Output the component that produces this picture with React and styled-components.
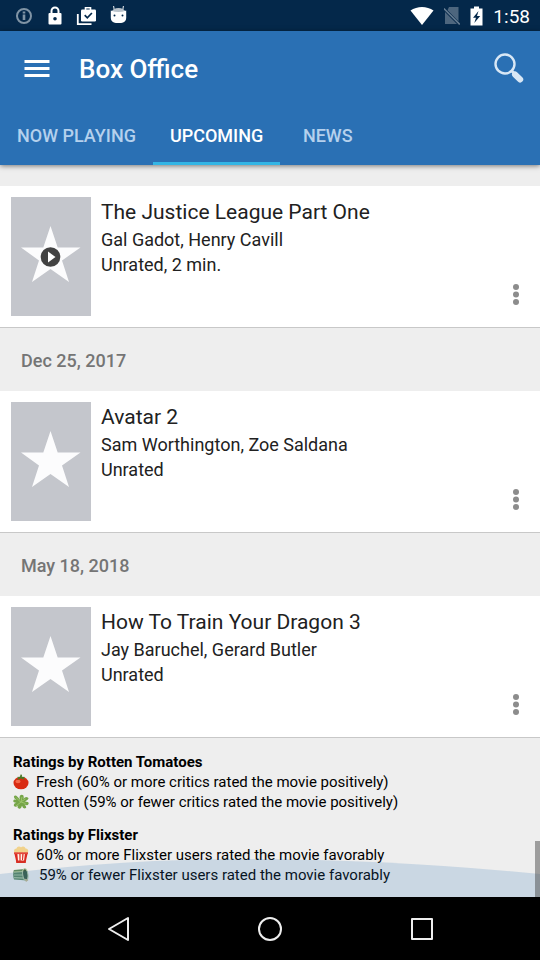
import React, { useState } from "react";
import styled, { createGlobalStyle } from "styled-components";

const GlobalStyle = createGlobalStyle`
  * { box-sizing: border-box; }
  body {
    margin: 0;
    background: #eeeeee;
    color: #212121;
    font-family: Roboto, "Noto Sans", sans-serif;
  }
  h1, h2, h3, p, ul { margin: 0; padding: 0; font-weight: 400; }
  ul { list-style: none; }
  button { border: 0; padding: 0; background: none; font: inherit; color: inherit; cursor: pointer; }
  svg { display: block; flex: none; }
`;

const Screen = styled.div`
  display: flex;
  flex-direction: column;
  min-height: 100vh;
`;

const StatusBar = styled.div`
  display: flex;
  align-items: center;
  justify-content: space-between;
  height: 31px;
  padding: 0 10px;
  background: #04284a;
  color: #ffffff;
`;

const StatusGroup = styled.div`
  display: flex;
  align-items: center;
  gap: ${(p) => p.$gap}px;
`;

const Clock = styled.time`
  font-size: 19px;
  line-height: 31px;
  padding-top: 1px;
`;

const AppBar = styled.header`
  position: relative;
  background: #2a70b4;
  color: #ffffff;
  box-shadow: 0 1px 5px rgba(0, 0, 0, 0.5);
`;

const Toolbar = styled.div`
  display: flex;
  align-items: center;
  height: 75px;
  padding: 0 11px 0 21px;
`;

const IconButton = styled.button`
  display: flex;
  align-items: center;
  justify-content: center;
  width: ${(p) => p.$size}px;
  height: ${(p) => p.$size}px;
`;

const Title = styled.h1`
  flex: 1;
  margin-left: 26px;
  font-size: 26px;
  line-height: 32px;
  font-weight: 500;
`;

const Tabs = styled.div`
  display: flex;
  height: 59px;
`;

const Tab = styled.button`
  min-width: 95px;
  padding: 3px 17px 0;
  border-bottom: 3px solid ${(p) => (p.$active ? "#33b5e5" : "transparent")};
  color: ${(p) => (p.$active ? "#ffffff" : "#b5d1ed")};
  font-size: 18px;
  font-weight: 500;
`;

const MovieList = styled.main`
  padding-top: 21px;
`;

const DateHeading = styled.h2`
  padding: 2px 21px 0;
  font-size: 18px;
  line-height: 61px;
  font-weight: 500;
  color: #757575;
`;

const MovieCard = styled.article`
  display: flex;
  gap: 10px;
  padding: 11px;
  background: #ffffff;
  border-bottom: 1px solid #c8c8c8;
`;

const Poster = styled.div`
  display: flex;
  align-items: center;
  justify-content: center;
  width: 80px;
  height: 119px;
  background: #c4c6cc;
`;

const MovieInfo = styled.div`
  flex: 1;
`;

const MovieTitle = styled.h3`
  font-size: 21px;
  line-height: 30px;
`;

const MovieLine = styled.p`
  font-size: 18px;
  line-height: 25px;
`;

const MoreButton = styled(IconButton)`
  align-self: flex-end;
  width: 26px;
  height: 44px;
`;

const Ratings = styled.footer`
  position: relative;
  display: flex;
  flex-direction: column;
  flex: 1;
  gap: 13px;
  padding: 14px 13px 12px;
  color: #000000;
  font-size: 15px;
  line-height: 20px;
`;

const RatingsTitle = styled.h2`
  font-size: 15px;
  line-height: 20px;
  font-weight: 700;
`;

const RatingRow = styled.li`
  display: flex;
  align-items: center;
  gap: ${(p) => (p.$wide ? 10 : 7)}px;
`;

const Wave = styled.div`
  position: absolute;
  inset: auto 0 0 0;
  height: 38px;
  pointer-events: none;
`;

const ScrollThumb = styled.div`
  position: absolute;
  right: 0;
  bottom: 0;
  width: 5px;
  height: 56px;
  background: rgba(70, 70, 70, 0.48);
`;

const NavBar = styled.nav`
  display: grid;
  grid-template-columns: repeat(3, 152px);
  justify-content: center;
  justify-items: center;
  align-items: center;
  height: 63px;
  background: #000000;
`;

const InfoIcon = () => (
  <svg width="24" height="20" viewBox="0 0 24 20" fill="none" stroke="#8094a5" strokeWidth="2">
    <circle cx="14" cy="10" r="7" />
    <path d="M14 8.500V14M14 5.500V7.500" strokeWidth="2.600" />
  </svg>
);

const LockIcon = () => (
  <svg width="14" height="20" viewBox="0 0 14 20">
    <path d="M3.500 8V5a3.500 3.500 0 0 1 7 0V8" fill="none" stroke="#fff" strokeWidth="2" />
    <path fillRule="evenodd" fill="#fff" d="M1.500 7h11a1 1 0 0 1 1 1v9.500a1 1 0 0 1-1 1h-11a1 1 0 0 1-1-1V8a1 1 0 0 1 1-1zm5.500 4a1.800 1.800 0 1 0 0 3.600 1.800 1.800 0 0 0 0-3.600z" />
  </svg>
);

const WorkDoneIcon = () => (
  <svg width="20" height="20" viewBox="0 0 20 20">
    <path d="M1.800 8v10.200H15.500" fill="none" stroke="#fff" strokeWidth="1.800" />
    <path d="M9.500 4V1.800h5V4" fill="none" stroke="#fff" strokeWidth="1.600" />
    <rect x="5" y="3.500" width="15" height="12" rx="1.200" fill="#fff" />
    <path d="M8.700 9.200l2.600 2.600 4.600-4.800" fill="none" stroke="#04284a" strokeWidth="1.700" />
  </svg>
);

const DroidIcon = () => (
  <svg width="17" height="20" viewBox="0 0 17 20">
    <path d="M4.500 5L3.500 0M12.500 5l1-5" stroke="#cbd3da" strokeWidth="1.200" />
    <path d="M1 6.500Q3 2 8.500 2T16 6.500z" fill="#b9c2ca" />
    <path d="M.8 4.500Q8.500 7.500 16.200 4.500V12a5 5 0 0 1-5 5H5.800a5 5 0 0 1-5-5z" fill="#fff" />
    <circle cx="4.500" cy="9.500" r="1" fill="#04284a" />
    <circle cx="12.500" cy="9.500" r="1" fill="#04284a" />
  </svg>
);

const WifiIcon = () => (
  <svg width="24" height="20" viewBox="0 0 24 20">
    <path d="M.5 4.500C7-.3 17-.3 23.500 4.500L12 19z" fill="#fff" />
  </svg>
);

const NoSimIcon = () => (
  <svg width="16" height="20" viewBox="1 0 16 20">
    <path d="M6 1h9.500v14.500L4.500 4.200zM2 6l12 12H2z" fill="#4d667e" />
    <path d="M.8 2.500l16 16" stroke="#687e93" strokeWidth="1.600" />
  </svg>
);

const BatteryIcon = () => (
  <svg width="13" height="20" viewBox="0 0 13 20">
    <path d="M4 .5h5v2h3.500v17H.5v-17H4z" fill="#fff" />
    <path d="M8.500 5L3 11.700h3L4.300 17l5.900-7H7z" fill="#04284a" />
  </svg>
);

const MenuIcon = () => (
  <svg width="26" height="20" viewBox="0 0 26 20" stroke="#fff" strokeWidth="3">
    <path d="M0.500 2.500h25M0.500 9.500h25M0.500 16.500h25" />
  </svg>
);

const SearchIcon = () => (
  <svg width="30" height="32" viewBox="0 0 30 32" fill="none" stroke="#d8e7f5">
    <circle cx="11" cy="11" r="9.500" strokeWidth="2.400" />
    <path d="M17.800 18l3.500 3.500" strokeWidth="3" />
    <path d="M21 21.500l5.200 5" strokeWidth="6" strokeLinecap="round" />
  </svg>
);

const StarIcon = ({ playable }) => (
  <svg width="60" height="64" viewBox="0 0 60 64">
    <path d="M29.500 1l7.200 21.500H59.500L41 35.500 48 57 29.500 44 11 57l7-21.500L0 22.500h22.300z" fill="#fcfcfd" />
    {playable && (
      <>
        <circle cx="29.500" cy="32" r="9.800" fill="#424242" />
        <path d="M27 26.500v11l7.500-5.500z" fill="#fff" />
      </>
    )}
  </svg>
);

const MoreIcon = () => (
  <svg width="8" height="24" viewBox="0 0 8 24" fill="#8c8c8c">
    <circle cx="4" cy="5" r="3" />
    <circle cx="4" cy="12.500" r="3" />
    <circle cx="4" cy="20" r="3" />
  </svg>
);

const TomatoIcon = () => (
  <svg width="16" height="16" viewBox="0 0 16 16">
    <ellipse cx="8" cy="9" rx="7.500" ry="6.300" fill="#d92b12" />
    <ellipse cx="5" cy="7.500" rx="2.600" ry="1.700" fill="#f4694a" />
    <path d="M8 4.500L4 6l1.500-2.200L3.500 3l3.500-.3L7.500.5l1.500.2-.2 2.100L12.500 3l-2 1.200L12 6z" fill="#477824" />
  </svg>
);

const SplatIcon = () => (
  <svg width="16" height="16" viewBox="0 0 16 16">
    <path
      d="M7 6Q5.500 1 8.500.8T10.500 5Q12.500 1.800 14.800 3.500T12 7.500Q16.500 7.500 15.500 10T11.500 10.200Q14.500 13.500 12.200 14.300T9 11.800Q8 15.800 5.700 14.500T5.500 11.200Q2 14 1 11.800T3.500 8.800Q-.3 9 .3 6.800T3.500 6Q-.3 3.500 1.500 1.800T7 6z"
      fill="#75a548"
    />
    <path d="M3 3.500l4.500 4.500 5-3M8 8l-5 4M8 8l4.500 1.500M8 8l1-5" stroke="#9cc46b" strokeWidth="1" fill="none" />
  </svg>
);

const PopcornIcon = () => (
  <svg width="16" height="18" viewBox="0 0 16 18">
    <path d="M2 7h12l-1.500 10h-9z" fill="#fff3e6" />
    <path d="M1.300 7h3l.9 10H3.500zM6.300 7h1.300v10H6.500zM9.300 7h1.400l-.7 7H9zM12 7h2.700l-2.200 10h-1.700z" fill="#dc2820" />
    <path d="M3 14.500h10l-.5 2.500h-9z" fill="#d62f24" />
    <g fill="#f1d28b">
      <circle cx="3.500" cy="5" r="2.500" />
      <circle cx="6" cy="3" r="2.500" />
      <circle cx="10" cy="3" r="2.500" />
      <circle cx="12.700" cy="5" r="2.500" />
      <circle cx="8" cy="5" r="2.500" />
    </g>
    <path d="M1 7.200h14" stroke="#e2473b" strokeWidth="1.800" />
  </svg>
);

const BucketIcon = () => (
  <svg width="16" height="16" viewBox="0 0 16 16">
    <path d="M.8 3L12 2l2.500 11.500L1 12.500Q-.5 8 .8 3z" fill="#5f8a62" />
    <path d="M1 5.200l10-.7M1 8h10M1 10.700l11 .5" stroke="#a9c4a0" strokeWidth="1.200" />
    <ellipse cx="12.300" cy="7.500" rx="2.600" ry="5.800" transform="rotate(-8 12.300 7.500)" fill="#3d5f45" stroke="#b3c8a4" />
    <path d="M11.500 11.500l4 1.500-2.500 2z" fill="#c7b88d" />
  </svg>
);

const WaveShape = () => (
  <svg width="100%" height="38" viewBox="0 0 540 38" preserveAspectRatio="none">
    <path d="M0 15Q125 0 245 0Q385 0 540 15V38H0z" fill="#2b70b5" fillOpacity="0.185" />
  </svg>
);

const movies = [
  { title: "The Justice League Part One", cast: "Gal Gadot, Henry Cavill", meta: "Unrated, 2 min.", playable: true },
  { date: "Dec 25, 2017", title: "Avatar 2", cast: "Sam Worthington, Zoe Saldana", meta: "Unrated" },
  { date: "May 18, 2018", title: "How To Train Your Dragon 3", cast: "Jay Baruchel, Gerard Butler", meta: "Unrated" },
];

const ratings = [
  {
    title: "Ratings by Rotten Tomatoes",
    rows: [
      { Icon: TomatoIcon, text: "Fresh (60% or more critics rated the movie positively)" },
      { Icon: SplatIcon, text: "Rotten (59% or fewer critics rated the movie positively)" },
    ],
  },
  {
    title: "Ratings by Flixster",
    rows: [
      { Icon: PopcornIcon, text: "60% or more Flixster users rated the movie favorably" },
      { Icon: BucketIcon, text: "59% or fewer Flixster users rated the movie favorably", wide: true },
    ],
  },
];

const tabs = ["NOW PLAYING", "UPCOMING", "NEWS"];

export default function App() {
  const [active, setActive] = useState("UPCOMING");

  return (
    <Screen>
      <GlobalStyle />
      <StatusBar>
        <StatusGroup $gap={14}>
          <InfoIcon />
          <LockIcon />
          <WorkDoneIcon />
          <DroidIcon />
        </StatusGroup>
        <StatusGroup $gap={10}>
          <WifiIcon />
          <NoSimIcon />
          <BatteryIcon />
          <Clock>1:58</Clock>
        </StatusGroup>
      </StatusBar>
      <AppBar>
        <Toolbar>
          <IconButton $size={32} aria-label="Open menu"><MenuIcon /></IconButton>
          <Title>Box Office</Title>
          <IconButton $size={40} aria-label="Search"><SearchIcon /></IconButton>
        </Toolbar>
        <Tabs role="tablist">
          {tabs.map((tab) => (
            <Tab
              key={tab}
              role="tab"
              aria-selected={tab === active}
              $active={tab === active}
              onClick={() => setActive(tab)}
            >
              {tab}
            </Tab>
          ))}
        </Tabs>
      </AppBar>
      <MovieList>
        {movies.map(({ date, title, cast, meta, playable }) => (
          <section key={title}>
            {date && <DateHeading>{date}</DateHeading>}
            <MovieCard>
              <Poster><StarIcon playable={playable} /></Poster>
              <MovieInfo>
                <MovieTitle>{title}</MovieTitle>
                <MovieLine>{cast}</MovieLine>
                <MovieLine>{meta}</MovieLine>
              </MovieInfo>
              <MoreButton aria-label={`More options for ${title}`}><MoreIcon /></MoreButton>
            </MovieCard>
          </section>
        ))}
      </MovieList>
      <Ratings>
        {ratings.map(({ title, rows }) => (
          <section key={title}>
            <RatingsTitle>{title}</RatingsTitle>
            <ul>
              {rows.map(({ Icon, text, wide }) => (
                <RatingRow key={text} $wide={wide}>
                  <Icon />
                  <span>{text}</span>
                </RatingRow>
              ))}
            </ul>
          </section>
        ))}
        <Wave><WaveShape /></Wave>
        <ScrollThumb />
      </Ratings>
      <NavBar>
        <IconButton $size={48} aria-label="Back">
          <svg width="26" height="26" viewBox="0 0 26 26" fill="none" stroke="#eee" strokeWidth="2" strokeLinejoin="round">
            <path d="M23 2v22L4 13z" />
          </svg>
        </IconButton>
        <IconButton $size={48} aria-label="Home">
          <svg width="26" height="26" viewBox="0 0 26 26" fill="none" stroke="#eee" strokeWidth="2">
            <circle cx="13" cy="13" r="11" />
          </svg>
        </IconButton>
        <IconButton $size={48} aria-label="Recent apps">
          <svg width="26" height="26" viewBox="0 0 26 26" fill="none" stroke="#eee" strokeWidth="2" strokeLinejoin="round">
            <rect x="3" y="3" width="20" height="20" />
          </svg>
        </IconButton>
      </NavBar>
    </Screen>
  );
}
